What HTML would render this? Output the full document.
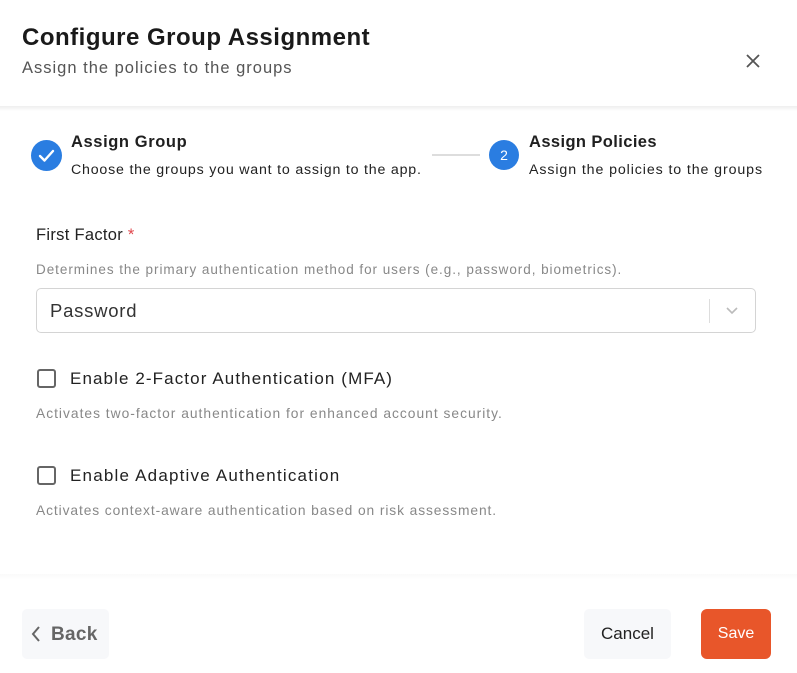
<!DOCTYPE html>
<html><head><meta charset="utf-8"><style>
*{box-sizing:border-box;margin:0;padding:0}
body{width:797px;height:673px;background:#fff;font-family:"Liberation Sans",sans-serif;color:#1f1f1f;position:relative;overflow:hidden}
.abs{position:absolute;white-space:nowrap}
</style></head><body>
<div class="abs" style="left:22px;top:24px;font-size:24px;font-weight:bold;color:#1a1a1a;letter-spacing:0.5px">Configure Group Assignment</div>
<div class="abs" style="left:22px;top:59px;font-size:16.5px;color:#555;letter-spacing:1px">Assign the policies to the groups</div>
<svg class="abs" style="left:745px;top:53px" width="16" height="16" viewBox="0 0 16 16"><path d="M2 2L14 14M14 2L2 14" stroke="#555" stroke-width="1.8"/></svg>
<div class="abs" style="left:0;top:106px;width:797px;height:5px;background:linear-gradient(#eee,#fff)"></div>

<div class="abs" style="left:31px;top:140px;width:31px;height:31px;border-radius:50%;background:#2a7de1"></div>
<svg class="abs" style="left:31px;top:140px" width="31" height="31" viewBox="0 0 31 31"><path d="M9 16l4.5 4.5L22 11" stroke="#fff" stroke-width="2.4" fill="none" stroke-linecap="round" stroke-linejoin="round"/></svg>
<div class="abs" style="left:71px;top:133px;font-size:16.5px;font-weight:bold;letter-spacing:0.6px">Assign Group</div>
<div class="abs" style="left:71px;top:162px;font-size:14.2px;color:#222;letter-spacing:0.8px">Choose the groups you want to assign to the app.</div>
<div class="abs" style="left:432px;top:154px;width:48px;height:2px;background:#ddd"></div>
<div class="abs" style="left:489px;top:140px;width:30px;height:30px;border-radius:50%;background:#2a7de1;color:#fff;font-size:14px;text-align:center;line-height:30px">2</div>
<div class="abs" style="left:529px;top:133px;font-size:16.5px;font-weight:bold;letter-spacing:0.4px">Assign Policies</div>
<div class="abs" style="left:529px;top:162px;font-size:14.2px;color:#222;letter-spacing:0.9px">Assign the policies to the groups</div>

<div class="abs" style="left:36px;top:226px;font-size:16.5px;color:#222;letter-spacing:0.3px">First Factor <span style="color:#e0484d">*</span></div>
<div class="abs" style="left:36px;top:262px;font-size:13.5px;color:#888;letter-spacing:0.95px">Determines the primary authentication method for users (e.g., password, biometrics).</div>
<div class="abs" style="left:36px;top:288px;width:720px;height:45px;border:1px solid #d4d4d4;border-radius:5px"></div>
<div class="abs" style="left:50px;top:300px;font-size:18.5px;color:#333;letter-spacing:0.75px">Password</div>
<div class="abs" style="left:709px;top:299px;width:1px;height:24px;background:#ddd"></div>
<svg class="abs" style="left:725px;top:305px" width="14" height="10" viewBox="0 0 14 10"><path d="M2 3l5 5 5-5" stroke="#bbb" stroke-width="1.6" fill="none"/></svg>

<div class="abs" style="left:37px;top:369px;width:19px;height:19px;border:2px solid #666;border-radius:3px"></div>
<div class="abs" style="left:70px;top:369px;font-size:17px;color:#222;letter-spacing:1.1px">Enable 2-Factor Authentication (MFA)</div>
<div class="abs" style="left:36px;top:406px;font-size:13.8px;color:#888;letter-spacing:1px">Activates two-factor authentication for enhanced account security.</div>
<div class="abs" style="left:37px;top:466px;width:19px;height:19px;border:2px solid #666;border-radius:3px"></div>
<div class="abs" style="left:70px;top:466px;font-size:17px;color:#222;letter-spacing:1.2px">Enable Adaptive Authentication</div>
<div class="abs" style="left:36px;top:503px;font-size:13.8px;color:#888;letter-spacing:0.9px">Activates context-aware authentication based on risk assessment.</div>

<div class="abs" style="left:0;top:574px;width:797px;height:6px;background:linear-gradient(#fafafa,#fff)"></div>
<div class="abs" style="left:22px;top:609px;width:87px;height:50px;background:#f7f8fa;border-radius:5px"></div>
<svg class="abs" style="left:30px;top:625px" width="12" height="18" viewBox="0 0 12 18"><path d="M9 2L3 9l6 7" stroke="#666" stroke-width="2" fill="none"/></svg>
<div class="abs" style="left:51px;top:624px;font-size:19px;color:#666;font-weight:bold;letter-spacing:0.3px">Back</div>
<div class="abs" style="left:584px;top:609px;width:87px;height:50px;background:#f7f8fa;border-radius:5px;font-size:17px;text-align:center;line-height:50px;color:#222">Cancel</div>
<div class="abs" style="left:701px;top:609px;width:70px;height:50px;background:#e8562a;border-radius:6px;font-size:16px;text-align:center;line-height:50px;color:#fff">Save</div>
</body></html>
